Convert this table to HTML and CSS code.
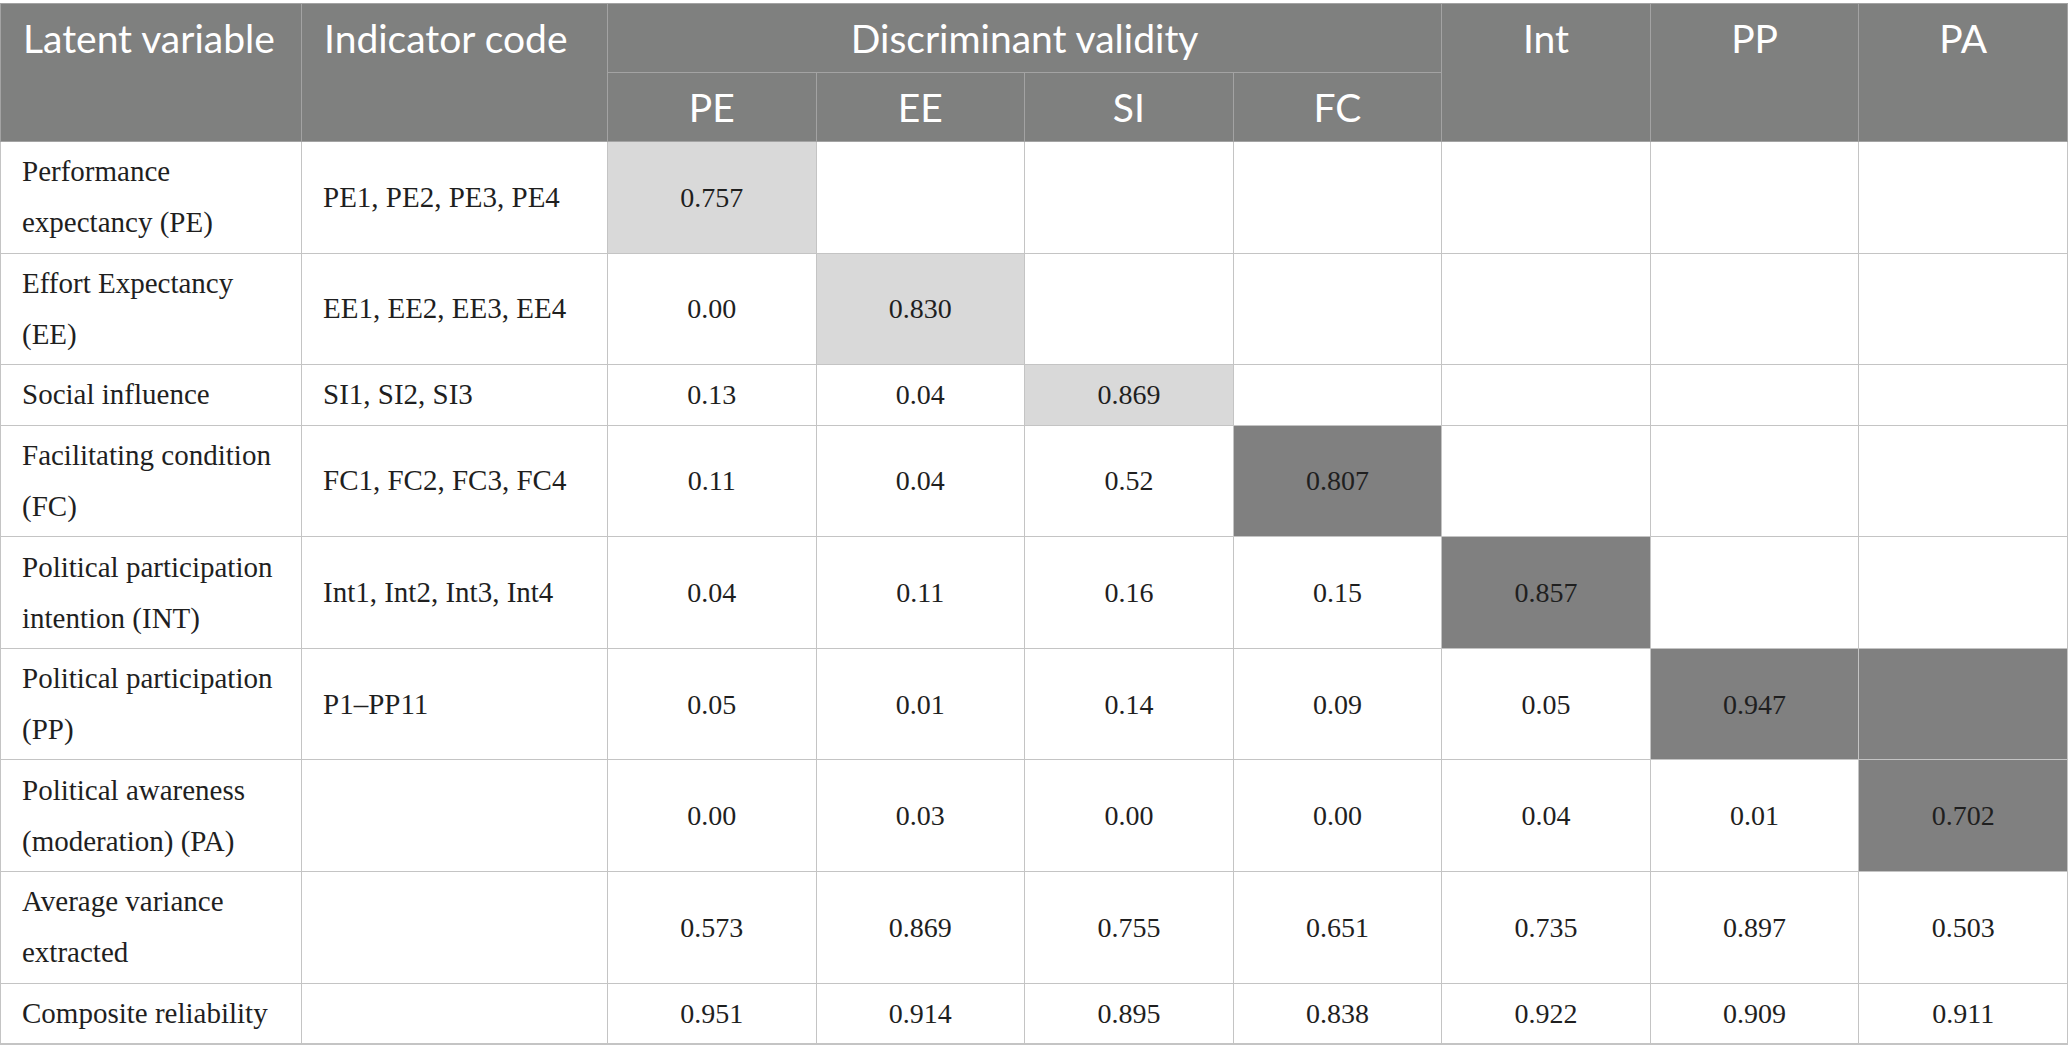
FILE: index.html
```html
<!DOCTYPE html>
<html lang="en">
<head>
<meta charset="utf-8">
<title>Discriminant validity</title>
<link rel="stylesheet" href="styles.css">
</head>
<body>
<div class="wrap">
<table class="dv">
  <colgroup>
    <col class="c-name"><col class="c-code">
    <col><col><col><col><col><col><col>
  </colgroup>
  <thead>
    <tr>
      <th rowspan="2" class="left top">Latent variable</th>
      <th rowspan="2" class="left top">Indicator code</th>
      <th colspan="4">Discriminant validity</th>
      <th rowspan="2" class="top">Int</th>
      <th rowspan="2" class="top">PP</th>
      <th rowspan="2" class="top">PA</th>
    </tr>
    <tr class="sub">
      <th>PE</th><th>EE</th><th>SI</th><th>FC</th>
    </tr>
  </thead>
  <tbody>
    <tr>
      <td class="txt">Performance<br>expectancy (PE)</td>
      <td class="txt">PE1, PE2, PE3, PE4</td>
      <td class="lt">0.757</td><td></td><td></td><td></td><td></td><td></td><td></td>
    </tr>
    <tr>
      <td class="txt">Effort Expectancy<br>(EE)</td>
      <td class="txt">EE1, EE2, EE3, EE4</td>
      <td>0.00</td><td class="lt">0.830</td><td></td><td></td><td></td><td></td><td></td>
    </tr>
    <tr>
      <td class="txt">Social influence</td>
      <td class="txt">SI1, SI2, SI3</td>
      <td>0.13</td><td>0.04</td><td class="lt">0.869</td><td></td><td></td><td></td><td></td>
    </tr>
    <tr>
      <td class="txt">Facilitating condition<br>(FC)</td>
      <td class="txt">FC1, FC2, FC3, FC4</td>
      <td>0.11</td><td>0.04</td><td>0.52</td><td class="dk">0.807</td><td></td><td></td><td></td>
    </tr>
    <tr>
      <td class="txt">Political participation<br>intention (INT)</td>
      <td class="txt">Int1, Int2, Int3, Int4</td>
      <td>0.04</td><td>0.11</td><td>0.16</td><td>0.15</td><td class="dk">0.857</td><td></td><td></td>
    </tr>
    <tr>
      <td class="txt">Political participation<br>(PP)</td>
      <td class="txt">P1–PP11</td>
      <td>0.05</td><td>0.01</td><td>0.14</td><td>0.09</td><td>0.05</td><td class="dk">0.947</td><td class="dk"></td>
    </tr>
    <tr>
      <td class="txt">Political awareness<br>(moderation) (PA)</td>
      <td class="txt"></td>
      <td>0.00</td><td>0.03</td><td>0.00</td><td>0.00</td><td>0.04</td><td>0.01</td><td class="dk">0.702</td>
    </tr>
    <tr>
      <td class="txt">Average variance<br>extracted</td>
      <td class="txt"></td>
      <td>0.573</td><td>0.869</td><td>0.755</td><td>0.651</td><td>0.735</td><td>0.897</td><td>0.503</td>
    </tr>
    <tr class="last">
      <td class="txt">Composite reliability</td>
      <td class="txt"></td>
      <td>0.951</td><td>0.914</td><td>0.895</td><td>0.838</td><td>0.922</td><td>0.909</td><td>0.911</td>
    </tr>
  </tbody>
</table>
</div>
</body>
</html>
```

FILE: styles.css
```css
html, body {
  margin: 0;
  padding: 0;
  background: #ffffff;
}

.wrap {
  padding-top: 3px;
}

.dv {
  width: 2068px;
  border-collapse: collapse;
  table-layout: fixed;
  border-top: 1px solid #c4c4c4;
  border-left: 1px solid #c4c4c4;
}

.dv .c-name { width: 301px; }
.dv .c-code { width: 306px; }

.dv th {
  background: #7f807f;
  color: #ffffff;
  font-family: Lato, "Open Sans", sans-serif;
  font-weight: 400;
  font-size: 39px;
  line-height: 68px;
  height: 68px;
  padding: 0;
  text-align: center;
  vertical-align: middle;
  border: 1px solid #a3a3a3;
  white-space: nowrap;
}

.dv th.left {
  text-align: left;
  padding-left: 22px;
}

.dv th.top {
  vertical-align: top;
}

.dv td {
  font-family: "Liberation Serif", "Times New Roman", serif;
  font-size: 28px;
  line-height: 51px;
  color: #1f1f1f;
  text-align: center;
  vertical-align: middle;
  padding: 4.2px 8px 4.4px;
  border: 1px solid #c4c4c4;
}

.dv td.txt {
  font-size: 29px;
  text-align: left;
  padding-left: 21px;
  padding-right: 4px;
  white-space: nowrap;
}

.dv td.lt {
  background: #d9d9d9;
}

.dv td.dk {
  background: #808080;
}

.dv tr.last td {
  border-bottom: 2px solid #c4c4c4;
}
```
